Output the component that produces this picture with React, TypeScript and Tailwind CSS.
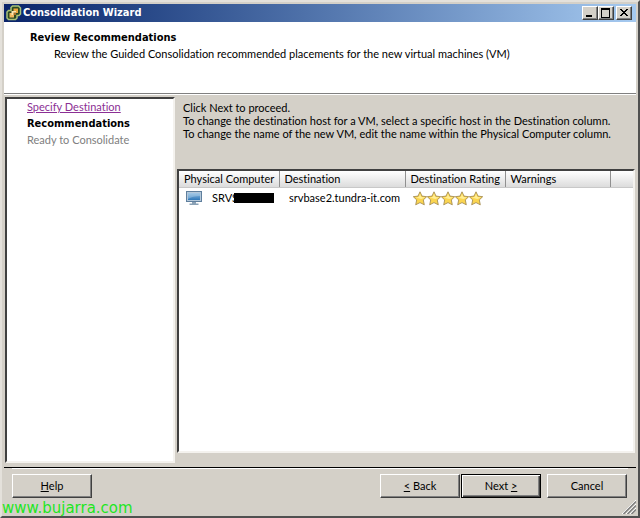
import type { ReactNode } from 'react';
import { clsx } from 'clsx';

const steps = [
  { label: 'Specify Destination', state: 'done' },
  { label: 'Recommendations', state: 'current' },
  { label: 'Ready to Consolidate', state: 'pending' },
];

const columns = ['Physical Computer', 'Destination', 'Destination Rating', 'Warnings', ''];

const rows = [{ name: 'SRVS', destination: 'srvbase2.tundra-it.com', rating: 5 }];

const boldText = "font-['DejaVu_Sans_Condensed','DejaVu_Sans',sans-serif] font-bold";

function AppIcon() {
  return (
    <svg width="16" height="16" viewBox="0 0 16 16" aria-hidden="true">
      <path
        d="M6.500 1h6l2 2v6l-1.500 1.500H11v2.500l-1.500 1.500h-7L1 13V7l1.500-1.500H5V2.500z"
        fill="#2c4a22"
        stroke="#a9c278"
        strokeWidth="1.500"
      />
      <path d="M7.500 3.500h4.500V8H7.500z" fill="#eda83e" />
      <path d="M3.500 8H8v4.500H3.500z" fill="#f0b860" />
      <path d="M5.500 6H10v4H5.500z" fill="#fbe6b0" />
      <path d="M7.500 7.500H10V10H7.500z" fill="#a8702a" />
    </svg>
  );
}

function ComputerIcon() {
  return (
    <svg width="16" height="16" viewBox="0 0 16 16" aria-hidden="true">
      <defs>
        <linearGradient id="screen" x1="0" y1="0" x2="0" y2="1">
          <stop offset="0" stopColor="#8fbbe0" />
          <stop offset="1" stopColor="#2f78b9" />
        </linearGradient>
      </defs>
      <rect x=".5" y="1.500" width="15" height="10" fill="#b4c8da" stroke="#5f7f9d" />
      <rect x="2" y="3" width="12" height="7" fill="url(#screen)" />
      <path d="M2 3h12v3c-5 0-9 1-12 3z" fill="#c6e0f2" opacity=".35" />
      <path d="M6 12h4v1.500h2.500V15h-9v-1.500H6z" fill="#8aa1b5" />
    </svg>
  );
}

function Star() {
  return (
    <svg width="14" height="15" viewBox="0 0 14 15" aria-hidden="true">
      <path
        d="M7 .8l2 4.300 4.700.6-3.400 3.200 1 4.900L7 11.600l-4.300 2.200 1-4.900L.3 5.700 5 5.100z"
        fill="#fbd550"
        stroke="#9c8347"
        strokeWidth=".8"
        strokeLinejoin="round"
      />
      <path d="M7 2.500l1.200 3.500 4 .4-4 1.600-5.500-1.600 3.200-.4z" fill="#ffee96" />
    </svg>
  );
}

const raised =
  'border border-t-white border-l-white border-r-[#404040] border-b-[#404040] bg-[#d4d0c8] shadow-[inset_-1px_-1px_0_#808080]';

const sunken = 'border-2 border-t-[#404040] border-l-[#404040] border-r-[#f4f2ee] border-b-[#f4f2ee] bg-white';

function CaptionButton({ label, children }: { label: string; children: ReactNode }) {
  return (
    <button type="button" aria-label={label} className={clsx(raised, 'h-[14px] w-4')}>
      <svg width="14" height="12" viewBox="0 0 14 12" fill="none" stroke="#000" shapeRendering="crispEdges">
        {children}
      </svg>
    </button>
  );
}

function WizardButton({ primary, className, children }: { primary?: boolean; className?: string; children: ReactNode }) {
  return (
    <button
      type="button"
      className={clsx(
        'h-6 w-20 text-center leading-5',
        primary
          ? 'border border-black bg-[#d4d0c8] shadow-[inset_1px_1px_0_#fff,inset_-1px_-1px_0_#404040,inset_-2px_-2px_0_#808080]'
          : raised,
        className,
      )}
    >
      {children}
    </button>
  );
}

export default function App() {
  return (
    <div className="relative flex min-h-screen flex-col border-t-2 border-r-2 border-b-2 border-l-2 border-t-[#e4e1db] border-r-[#505050] border-b-[#505050] border-l-[#e4e1db] bg-[#d4d0c8] p-0.5 font-['Lato',sans-serif] text-[11px] text-black [font-variant-ligatures:none]">
      <header>
        <div className="flex h-[18px] items-center bg-linear-to-r from-[#0a246a] to-[#a6caf0] pr-1 pl-0.5">
          <AppIcon />
          <span className={clsx(boldText, 'ml-px flex-1 text-white')}>Consolidation Wizard</span>
          <div className="flex">
            <CaptionButton label="Minimize">
              <path d="M3 9h6" strokeWidth="2" />
            </CaptionButton>
            <CaptionButton label="Maximize">
              <path d="M2 2h9" strokeWidth="2" />
              <path d="M2.500 2v8.500h8V2" />
            </CaptionButton>
            <span className="w-0.5" />
            <CaptionButton label="Close">
              <path d="M3 2l7 7M4 2l7 7M10 2l-7 7M11 2l-7 7" />
            </CaptionButton>
          </div>
        </div>
        <div className="h-[72px] border-b border-[#808080] bg-white pt-2 pl-[26px] leading-4">
          <h1 className={boldText}>Review Recommendations</h1>
          <p className="pl-6">Review the Guided Consolidation recommended placements for the new virtual machines (VM)</p>
        </div>
      </header>

      <main className="flex flex-1 gap-0.5 border-t border-white px-px pt-0.5 pb-1">
        <nav className={clsx(sunken, 'w-[170px] shrink-0 pl-5 leading-4')}>
          <ul>
            {steps.map((step) => (
              <li key={step.label}>
                {step.state === 'done' && (
                  <a href="#destination" className="text-[#8b2f94] underline">
                    {step.label}
                  </a>
                )}
                {step.state === 'current' && <span className={boldText}>{step.label}</span>}
                {step.state === 'pending' && <span className="text-[#808080]">{step.label}</span>}
              </li>
            ))}
          </ul>
        </nav>

        <section className="flex min-w-0 flex-1 flex-col pb-[10px]">
          <div className="h-[72px] pt-1 pl-1.5 leading-[13px]">
            <p>Click Next to proceed.</p>
            <p>To change the destination host for a VM, select a specific host in the Destination column.</p>
            <p>To change the name of the new VM, edit the name within the Physical Computer column.</p>
          </div>

          <div className={clsx(sunken, 'flex-1')}>
            <table className="w-full table-fixed border-collapse text-left">
              <colgroup>
                <col className="w-[100px]" />
                <col className="w-[126px]" />
                <col className="w-[100px]" />
                <col className="w-[105px]" />
                <col />
              </colgroup>
              <thead>
                <tr className="h-4 bg-linear-to-b from-white to-[#dcdcdc]">
                  {columns.map((column) => (
                    <th
                      key={column}
                      className="border-r border-b border-r-[#909090] border-b-[#c8c8c8] py-0 pl-[5px] leading-[15px] font-normal whitespace-nowrap last:border-r-0"
                    >
                      {column}
                    </th>
                  ))}
                </tr>
              </thead>
              <tbody>
                {rows.map((row) => (
                  <tr key={row.name} className="h-[22px]">
                    <td className="p-0 pl-[7px]">
                      <div className="flex items-center">
                        <ComputerIcon />
                        <span className="ml-[10px]">{row.name}</span>
                        <span className="relative -ml-1 h-[10px] w-10 bg-black" />
                      </div>
                    </td>
                    <td className="p-0 pl-[10px] whitespace-nowrap">{row.destination}</td>
                    <td className="p-0 pl-2">
                      <div className="flex" role="img" aria-label={`${row.rating} stars`}>
                        {Array.from({ length: row.rating }, (_, i) => (
                          <Star key={i} />
                        ))}
                      </div>
                    </td>
                    <td />
                    <td />
                  </tr>
                ))}
              </tbody>
            </table>
          </div>
        </section>
      </main>

      <footer className="relative h-[47px] border-t border-black px-2">
        <div className="flex border-t border-white pt-[5px]">
          <WizardButton>
            <u>H</u>elp
          </WizardButton>
          <WizardButton className="ml-auto">
            <u>&lt;</u> Back
          </WizardButton>
          <WizardButton primary className="ml-px">
            Next <u>&gt;</u>
          </WizardButton>
          <WizardButton className="mr-px ml-1.5">Cancel</WizardButton>
        </div>
        <svg className="absolute right-0 bottom-0" width="14" height="14" viewBox="0 0 14 14" aria-hidden="true">
          <path d="M0 14L14 0M4 14L14 4M8 14l6-6" stroke="#fff" />
          <path d="M1.500 14L14 1.500M5.500 14L14 5.500M9.500 14L14 9.500" stroke="#808080" strokeWidth="1.500" />
        </svg>
      </footer>
      <span className="absolute bottom-0 left-0 font-['DejaVu_Sans',sans-serif] text-[15px] leading-4 text-[#1fe61f]">
        www.bujarra.com
      </span>
    </div>
  );
}
